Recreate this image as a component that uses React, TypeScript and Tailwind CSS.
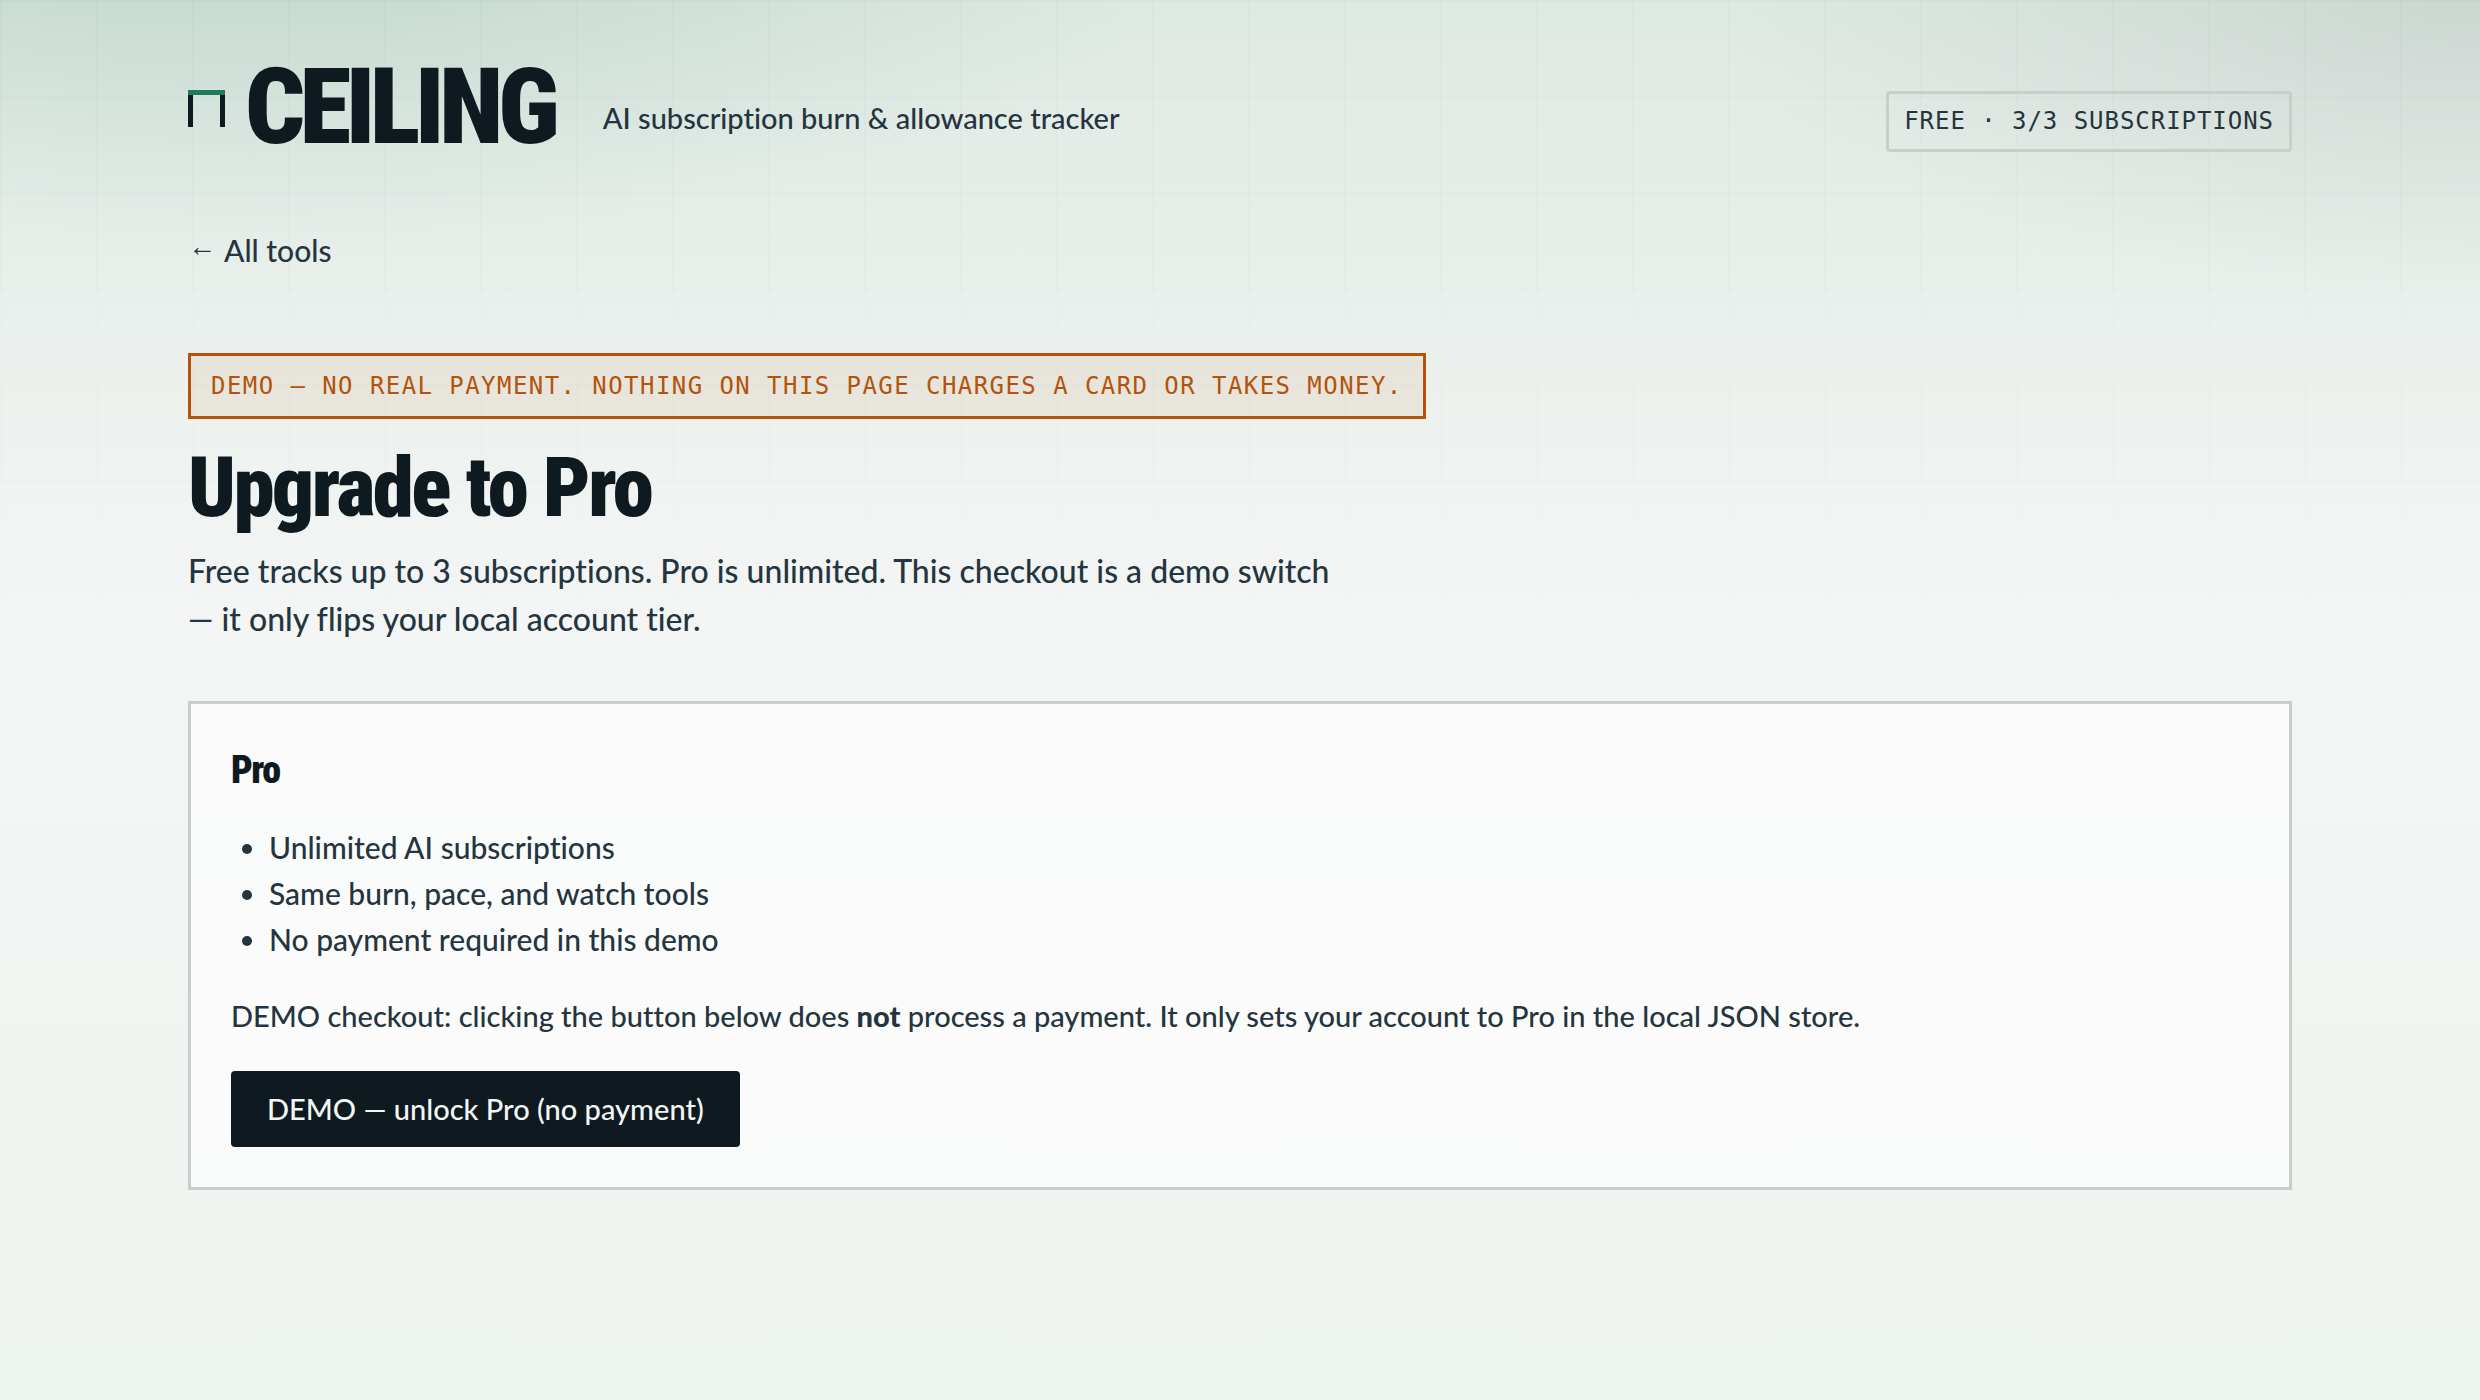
const features = [
  "Unlimited AI subscriptions",
  "Same burn, pace, and watch tools",
  "No payment required in this demo",
];

function Backdrop() {
  return (
    <div
      aria-hidden="true"
      className="pointer-events-none absolute inset-0 bg-[linear-gradient(rgba(14,26,32,0.014)_2px,transparent_2px),linear-gradient(90deg,rgba(14,26,32,0.014)_2px,transparent_2px)] bg-size-[96px_96px] mask-[linear-gradient(180deg,black,transparent_55%)]"
    />
  );
}

function Header() {
  return (
    <header className="flex flex-wrap items-end justify-between gap-x-12 gap-y-4">
      <div className="flex flex-wrap items-end gap-x-12 gap-y-4">
        <a href="#home" className="flex items-center gap-5 text-[#0e1a20]">
          <span
            aria-hidden="true"
            className="flex h-[37px] w-[37px] flex-col"
          >
            <span className="h-[5px] bg-[#1f7a5c]" />
            <span className="flex-1 border-x-[5px] border-[#0e1a20]" />
          </span>
          <span className="font-['Roboto_Condensed','Roboto',sans-serif] text-[105px] leading-[100px] font-black tracking-[-0.05em]">
            CEILING
          </span>
        </a>
        <p className="mb-[18px] text-[29px] leading-[44px]">
          AI subscription burn &amp; allowance tracker
        </p>
      </div>
      <p className="mb-1.5 rounded-sm border-3 border-[#c5d0cb] px-[15px] py-2 font-['DejaVu_Sans_Mono',monospace] text-2xl leading-[39px] font-normal tracking-[0.04em]">
        FREE · 3/3 SUBSCRIPTIONS
      </p>
    </header>
  );
}

function PlanCard() {
  return (
    <section
      aria-labelledby="plan-title"
      className="mt-[58px] border-3 border-[#c5d0cb] bg-[#fdfdfd]/70 p-10"
    >
      <h2
        id="plan-title"
        className="font-['Roboto_Condensed','Roboto',sans-serif] text-[38px] leading-[52px] font-black tracking-[-0.04em] text-[#0e1a20]"
      >
        Pro
      </h2>
      <ul className="mt-7 list-disc pl-[38px] text-[30px] leading-[46px]">
        {features.map((feature) => (
          <li key={feature}>{feature}</li>
        ))}
      </ul>
      <p className="mt-[31px] text-[29px] leading-[46px]">
        DEMO checkout: clicking the button below does{" "}
        <strong className="font-black">not</strong> process a payment. It only
        sets your account to Pro in the local JSON store.
      </p>
      <button
        type="button"
        className="mt-8 block rounded-sm bg-[#0e1a20] px-9 py-4 text-[29px] leading-[44px] text-[#f4f6f5]"
      >
        DEMO — unlock Pro (no payment)
      </button>
    </section>
  );
}

export default function App() {
  return (
    <div className="relative min-h-screen bg-[radial-gradient(1400px_520px_at_10%_-8%,rgba(31,122,92,0.18),transparent_70%),radial-gradient(1100px_420px_at_100%_0%,rgba(14,26,32,0.09),transparent_70%),linear-gradient(180deg,#dfe9e3_0%,#f4f6f5_45%,#edf3ee_100%)] font-['Lato',sans-serif] font-medium text-[#243540] [font-variant-ligatures:none]">
      <Backdrop />
      <div className="relative mx-auto max-w-[2200px] px-12 pt-[58px] pb-24">
        <Header />
        <nav className="mt-[70px] flex">
          <a
            href="#tools"
            className="flex items-center gap-2 text-[30px] leading-[45px]"
          >
            <span className="pb-2 font-['Liberation_Sans',sans-serif] text-[28px] leading-none font-bold">
              ←
            </span>
            All tools
          </a>
        </nav>
        <main className="mt-20">
          <p className="w-fit border-3 border-[#b45309] bg-[#b45309]/8 px-5 py-3 font-['DejaVu_Sans_Mono',monospace] text-2xl leading-9 font-normal tracking-[0.06em] text-[#b45309]">
            DEMO — NO REAL PAYMENT. NOTHING ON THIS PAGE CHARGES A CARD OR TAKES
            MONEY.
          </p>
          <h1 className="mt-7 font-['Roboto_Condensed','Roboto',sans-serif] text-[83px] leading-[81px] font-black tracking-[-0.03em] text-[#0e1a20]">
            Upgrade to Pro
          </h1>
          <p className="mt-[19px] max-w-[1160px] text-[32px] leading-[48px]">
            Free tracks up to 3 subscriptions. Pro is unlimited. This checkout
            is a demo switch — it only flips your local account tier.
          </p>
          <PlanCard />
        </main>
      </div>
    </div>
  );
}
